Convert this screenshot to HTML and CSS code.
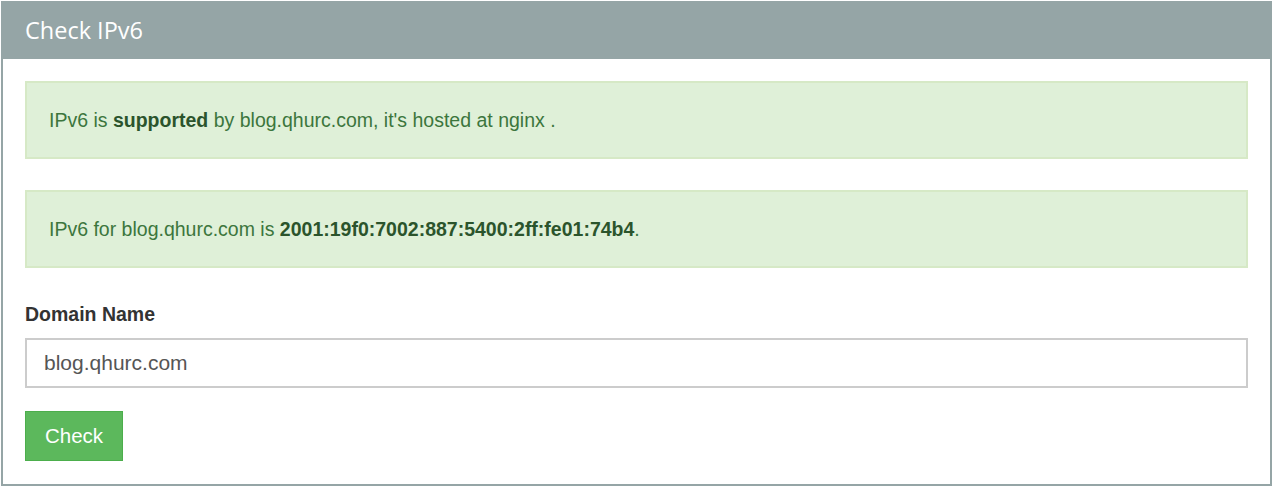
FILE: index.html
```html
<!DOCTYPE html>
<html>
<head>
<meta charset="utf-8">
<title>Check IPv6</title>
<link rel="stylesheet" href="styles.css">
</head>
<body>
<div class="panel">
  <div class="panel-heading">Check IPv6</div>
  <div class="panel-body">
    <div class="alert">IPv6 is <b>supported</b> by blog.qhurc.com, it's hosted at nginx .</div>
    <div class="alert">IPv6 for blog.qhurc.com is <b>2001:19f0:7002:887:5400:2ff:fe01:74b4</b>.</div>
    <form class="form">
      <label class="label" for="domain">Domain Name</label>
      <input class="input" id="domain" type="text" value="blog.qhurc.com">
      <button class="btn" type="button">Check</button>
    </form>
  </div>
</div>
</body>
</html>
```
FILE: styles.css
```css
html, body {
  margin: 0;
  padding: 0;
  background: #fff;
}
body {
  padding: 1px 0 0 1px;
  font-family: "Liberation Sans", Arial, sans-serif;
}
.panel {
  width: 1271px;
  height: 485px;
  box-sizing: border-box;
  border: 2px solid #95a5a6;
  border-top: none;
  display: flex;
  flex-direction: column;
}
.panel-heading {
  height: 58px;
  margin: 0 -2px;
  background: #95a5a6;
  color: #fff;
  font-family: "Open Sans", sans-serif;
  font-size: 23.5px;
  line-height: 58px;
  padding-left: 24px;
}
.panel-body {
  padding: 22px 22px 22px 22px;
}
.alert {
  background: #dff0d8;
  border: 2px solid #d6e9c6;
  color: #3c763d;
  font-size: 19.5px;
  line-height: 26px;
  padding: 24px 22px;
  margin-bottom: 31px;
}
.alert b {
  color: #2b542c;
}
.form {
  display: flex;
  flex-direction: column;
  align-items: flex-start;
}
.label {
  font-weight: bold;
  font-size: 19.5px;
  line-height: 26px;
  color: #333;
  margin-top: 2px;
  margin-bottom: 11px;
}
.input {
  width: 100%;
  height: 50px;
  box-sizing: border-box;
  border: 2px solid #ccc;
  padding: 0 17px;
  font-family: "Liberation Sans", Arial, sans-serif;
  font-size: 21px;
  color: #555;
  outline: none;
  margin: 0;
}
.btn {
  margin-top: 23px;
  height: 50px;
  min-width: 98px;
  box-sizing: border-box;
  background: #5cb85c;
  border: 1px solid #4cae4c;
  color: #fff;
  font-family: "Liberation Sans", Arial, sans-serif;
  font-size: 20.5px;
  padding: 0 19px;
  cursor: pointer;
}
```
